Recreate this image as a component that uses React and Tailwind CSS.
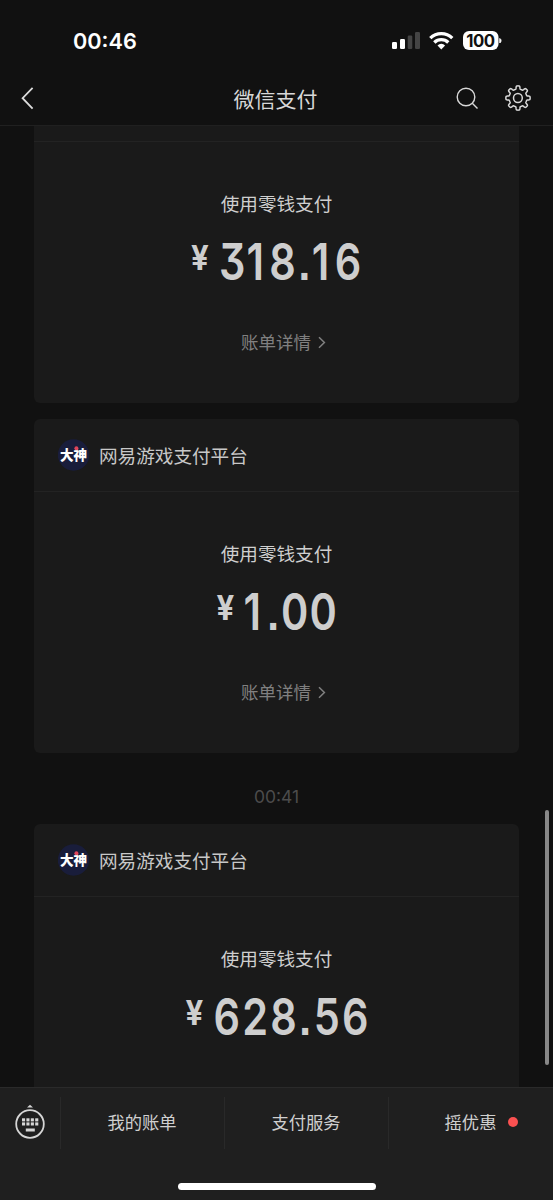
// eight rounded teeth around the settings wheel
const gearPath = (() => {
  const pts = []
  for (let i = 0; i < 320; i++) {
    const a = (i / 320) * Math.PI * 2
    const r = 10.55 + 1.6 * Math.tanh(3 * (Math.cos(8 * a) - 0.1))
    pts.push(`${(13 + r * Math.sin(a)).toFixed(2)} ${(13 - r * Math.cos(a)).toFixed(2)}`)
  }
  return `M${pts.join('L')}Z`
})()

const slotClass = c => {
  if (c === '.') return 'w-[18.3px] text-center'
  if (c === '1') return 'w-[26.8px] text-left'
  return 'w-[34.6px] text-center'
}

function StatusBar() {
  return (
    <div className="flex h-[72px] items-start justify-between pt-[26px] pr-[51px] pl-[73px]">
      <span className="font-[Inter,sans-serif] text-[21.7px] leading-[30px] font-semibold text-white">00:46</span>
      <svg className="mt-[4px]" width="110" height="22" viewBox="392 30 110 22">
        <rect x="392" y="42" width="5" height="7" rx="1.2" fill="#fff" />
        <rect x="400" y="39" width="5" height="10" rx="1.2" fill="#fff" />
        <rect x="407.7" y="35.5" width="4.6" height="13.5" rx="1.2" fill="#444" />
        <rect x="415" y="32" width="5" height="17" rx="1.2" fill="#444" />
        <g fill="none" stroke="#fff" strokeWidth="3.3">
          <path d="M430.3 38.2a15.6 15.6 0 0 1 22 0" />
          <path d="M434.3 42.5a10 10 0 0 1 14 0" />
        </g>
        <path d="M441.3 49.4l-3.8-4a5.4 5.4 0 0 1 7.6 0z" fill="#fff" />
        <rect x="463" y="31" width="35.5" height="19" rx="6" fill="#fff" />
        <path d="M499.8 38.5a2.6 2.6 0 0 1 0 4.4z" fill="#fff" stroke="#fff" strokeWidth="1" />
        <text x="480.5" y="46.6" textAnchor="middle" fontFamily="Inter, sans-serif" fontWeight="700" fontSize="16.8" letterSpacing="-0.5" fill="#111">100</text>
      </svg>
    </div>
  )
}

function NavBar() {
  return (
    <div className="flex h-[52px] items-center justify-between pr-[22px] pl-[20px]">
      <svg className="w-[76px]" height="24" viewBox="0 0 76 24" fill="none" stroke="#dcdcdc" strokeWidth="1.8">
        <path d="M12.6 1.8L2.6 12.2l10 10.4" />
      </svg>
      <h1 className="pt-[1px] text-[21px] text-[#d8d8d8]">微信支付</h1>
      <div className="flex w-[76px] items-center justify-between">
        <svg width="24" height="24" viewBox="0 0 24 24" fill="none" stroke="#d8d8d8" strokeWidth="1.4">
          <circle cx="11" cy="11" r="8.8" />
          <path d="M17.3 17.3l5.2 5.2" />
        </svg>
        <svg width="26" height="26" viewBox="0 0 26 26" fill="none" stroke="#d8d8d8" strokeWidth="1.5">
          <path d={gearPath} strokeLinejoin="round" />
          <circle cx="12.9" cy="13" r="4.4" />
        </svg>
      </div>
    </div>
  )
}

function Avatar() {
  return (
    <svg width="32" height="32" viewBox="0 0 32 32">
      <circle cx="15.5" cy="16" r="15.7" fill="#191d3b" />
      <text x="15.5" y="21.2" textAnchor="middle" fontFamily="'Noto Sans CJK SC', sans-serif" fontWeight="900" fontSize="13.6" fill="#fff">大神</text>
      <circle cx="18.4" cy="9.2" r="2" fill="#e0455a" />
    </svg>
  )
}

function PaymentCard({ amount }) {
  return (
    <section className="h-[334px] shrink-0 rounded-[6px] bg-[#1a1a1a]">
      <div className="flex h-[73px] items-center gap-[9px] border-b border-[#232323] pl-[24px]">
        <Avatar />
        <span className="text-[18.6px] text-[#c8c8c8]">网易游戏支付平台</span>
      </div>
      <div className="flex flex-col items-center pt-[47px]">
        <p className="text-[18.6px] leading-[28px] text-[#cfcfcf]">使用零钱支付</p>
        <div className="mt-[15px] flex h-[60px] scale-x-[0.82] items-center font-[Inter,sans-serif] font-semibold text-[#cecece] [font-feature-settings:'cv09','ss07']">
          <span className="-mt-[8px] mr-[10px] w-[24.4px] scale-x-[1.1] text-center text-[34.5px] leading-none font-bold">¥</span>
          <span className="flex text-[50.5px] leading-none">
            {amount.split('').map((c, i) => (
              <span key={i} className={slotClass(c)}>{c}</span>
            ))}
          </span>
        </div>
        <p className="mt-[37px] flex items-center gap-[7px] pl-[14px] text-[17.5px] leading-[26px] text-[#808080]">
          账单详情
          <svg width="8" height="13" viewBox="0 0 8 13" fill="none" stroke="#808080" strokeWidth="1.5">
            <path d="M1 1.2l5.4 5.3L1 11.8" />
          </svg>
        </p>
      </div>
    </section>
  )
}

function KeyboardIcon() {
  return (
    <svg className="-mt-[2px]" width="32" height="36" viewBox="0 0 32 36">
      <circle cx="16" cy="20" r="13.8" fill="none" stroke="#d6d6d6" strokeWidth="1.8" />
      <path d="M13 3.6L16 0.8l3 2.8z" fill="#d6d6d6" />
      {[8, 12.4, 16.8, 21.2].map(x => (
        <g key={x} fill="#d6d6d6">
          <rect x={x} y="14.3" width="3.1" height="3.1" />
          <rect x={x} y="18.4" width="3.1" height="3.1" />
        </g>
      ))}
      <rect x="11.8" y="24.5" width="9" height="3" fill="#d6d6d6" />
    </svg>
  )
}

function BottomMenu() {
  return (
    <footer className="flex h-[113px] shrink-0 flex-col border-t border-[#2a2a2a] bg-[#1f1f1f]">
      <div className="mt-[9px] flex h-[52px] text-[17.3px] text-[#cfcfcf]">
        <div className="flex w-[61px] items-center justify-center border-r border-[#292929]">
          <KeyboardIcon />
        </div>
        <div className="flex w-[164px] items-center justify-center border-r border-[#292929] pr-[1px] pb-[2px]">我的账单</div>
        <div className="flex w-[164px] items-center justify-center border-r border-[#292929] pr-[1px] pb-[2px]">支付服务</div>
        <div className="relative flex flex-1 items-center justify-center pr-[1px] pb-[2px]">
          摇优惠
          <span className="absolute right-[35.5px] size-[10px] rounded-full bg-[#fa5151]" />
        </div>
      </div>
      <div className="mx-auto mt-[34px] h-[7px] w-[198px] rounded-full bg-white" />
    </footer>
  )
}

export default function App() {
  return (
    <div className="relative flex h-[1200px] w-[553px] flex-col overflow-hidden bg-[#111] font-['Noto_Sans_CJK_SC',sans-serif]">
      <header className="h-[126px] shrink-0 border-b border-[#202020]">
        <StatusBar />
        <NavBar />
      </header>
      <main className="flex min-h-0 flex-1 flex-col overflow-hidden px-[34px]">
        <div className="-mt-[57px] flex flex-col">
          <PaymentCard amount="318.16" />
          <div className="h-4" />
          <PaymentCard amount="1.00" />
          <div className="flex h-[71px] items-center justify-center pt-[18px] font-[Inter,sans-serif] text-[17.5px] text-[#4c4c4c]">00:41</div>
          <PaymentCard amount="628.56" />
        </div>
      </main>
      <BottomMenu />
      <div className="absolute top-[810px] right-[4px] h-[255px] w-[4px] rounded-full bg-[#888]" />
    </div>
  )
}
